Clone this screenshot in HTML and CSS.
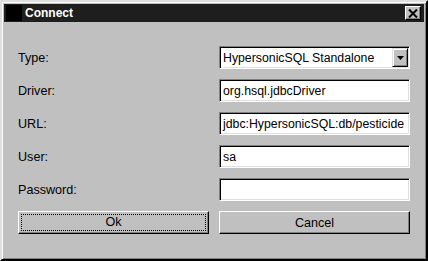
FILE: index.html
```html
<!DOCTYPE html>
<html>
<head>
<title>Connect</title>
<link rel="stylesheet" href="styles.css">
</head>
<body>
<div class="window">
  <div class="title-bar">
    <div class="title-icon"></div>
    <div class="title-text">Connect</div>
    <div class="close-button">
      <svg width="10" height="9" viewBox="0 0 10 9">
        <path d="M1 0.5 L9 8.5 M9 0.5 L1 8.5" stroke="#000" stroke-width="2"/>
      </svg>
    </div>
  </div>
  <div class="form">
    <label class="label">Type:</label>
    <div class="field combo">
      <span class="combo-text">HypersonicSQL Standalone</span>
      <span class="combo-arrow">
        <svg width="7" height="4" viewBox="0 0 7 4"><path d="M0 0 H7 L3.5 4 Z" fill="#000"/></svg>
      </span>
    </div>
    <label class="label">Driver:</label>
    <div class="field">org.hsql.jdbcDriver</div>
    <label class="label">URL:</label>
    <div class="field">jdbc:HypersonicSQL:db/pesticide</div>
    <label class="label">User:</label>
    <div class="field">sa</div>
    <label class="label">Password:</label>
    <div class="field"></div>
    <button class="button default"><span class="focus">Ok</span></button>
    <button class="button">Cancel</button>
  </div>
</div>
</body>
</html>
```

FILE: styles.css
```css
/* Old-style "Connect" dialog */
body {
  margin: 0;
  font-family: "Liberation Sans", Arial, sans-serif;
  font-size: 13px;
  color: #000;
  background-color: #c0c0c0;
}

.window {
  width: 428px;
  height: 261px;
  box-sizing: border-box;
  padding: 2px;
  background-color: #c0c0c0;
  border: 2px solid;
  border-color: #dfdfdf #000 #000 #dfdfdf;
  box-shadow: inset 1px 1px #fff, inset -1px -1px #808080;
}

.title-bar {
  height: 18px;
  background-color: #1e1e1e;
  display: flex;
  align-items: center;
  padding: 0 3px 0 2px;
}

.title-icon {
  width: 16px;
  height: 16px;
  background-color: #000;
}

.title-text {
  flex: 1;
  margin-left: 3px;
  color: #fff;
  font-weight: bold;
  font-size: 12px;
}

.close-button {
  width: 16px;
  height: 14px;
  box-sizing: border-box;
  background-color: #c0c0c0;
  border: 1px solid;
  border-color: #fff #000 #000 #fff;
  box-shadow: inset -1px -1px #808080;
  display: flex;
  align-items: center;
  justify-content: center;
}

.form {
  display: grid;
  grid-template-columns: 191px 191px;
  grid-auto-rows: 23px;
  column-gap: 10px;
  row-gap: 10px;
  padding: 24px 0 0 14px;
}

.label {
  display: flex;
  align-items: center;
  font-size: 12.6px;
}

.field {
  box-sizing: border-box;
  background-color: #fff;
  border: 1px solid;
  border-color: #808080 #fff #fff #808080;
  box-shadow: inset 1px 1px #000, inset -1px -1px #dfdfdf;
  padding: 0 2px 0 3px;
  display: flex;
  align-items: center;
  white-space: nowrap;
  overflow: hidden;
  font-size: 12.3px;
}

.combo {
  padding-right: 1px;
}

.combo-text {
  flex: 1;
}

.combo-arrow {
  width: 16px;
  height: 19px;
  box-sizing: border-box;
  background-color: #c0c0c0;
  border: 1px solid;
  border-color: #dfdfdf #000 #000 #dfdfdf;
  box-shadow: inset 1px 1px #fff, inset -1px -1px #808080;
  display: flex;
  align-items: center;
  justify-content: center;
}

.button {
  font-family: inherit;
  font-size: 12.6px;
  color: #000;
  background-color: #c0c0c0;
  border: 1px solid;
  border-color: #fff #000 #000 #fff;
  box-shadow: inset -1px -1px #808080;
  padding: 2px;
  margin: 0;
}

.button.default .focus {
  display: block;
  height: 100%;
  box-sizing: border-box;
  border: 1px dotted #000;
  line-height: 15px;
}
```
